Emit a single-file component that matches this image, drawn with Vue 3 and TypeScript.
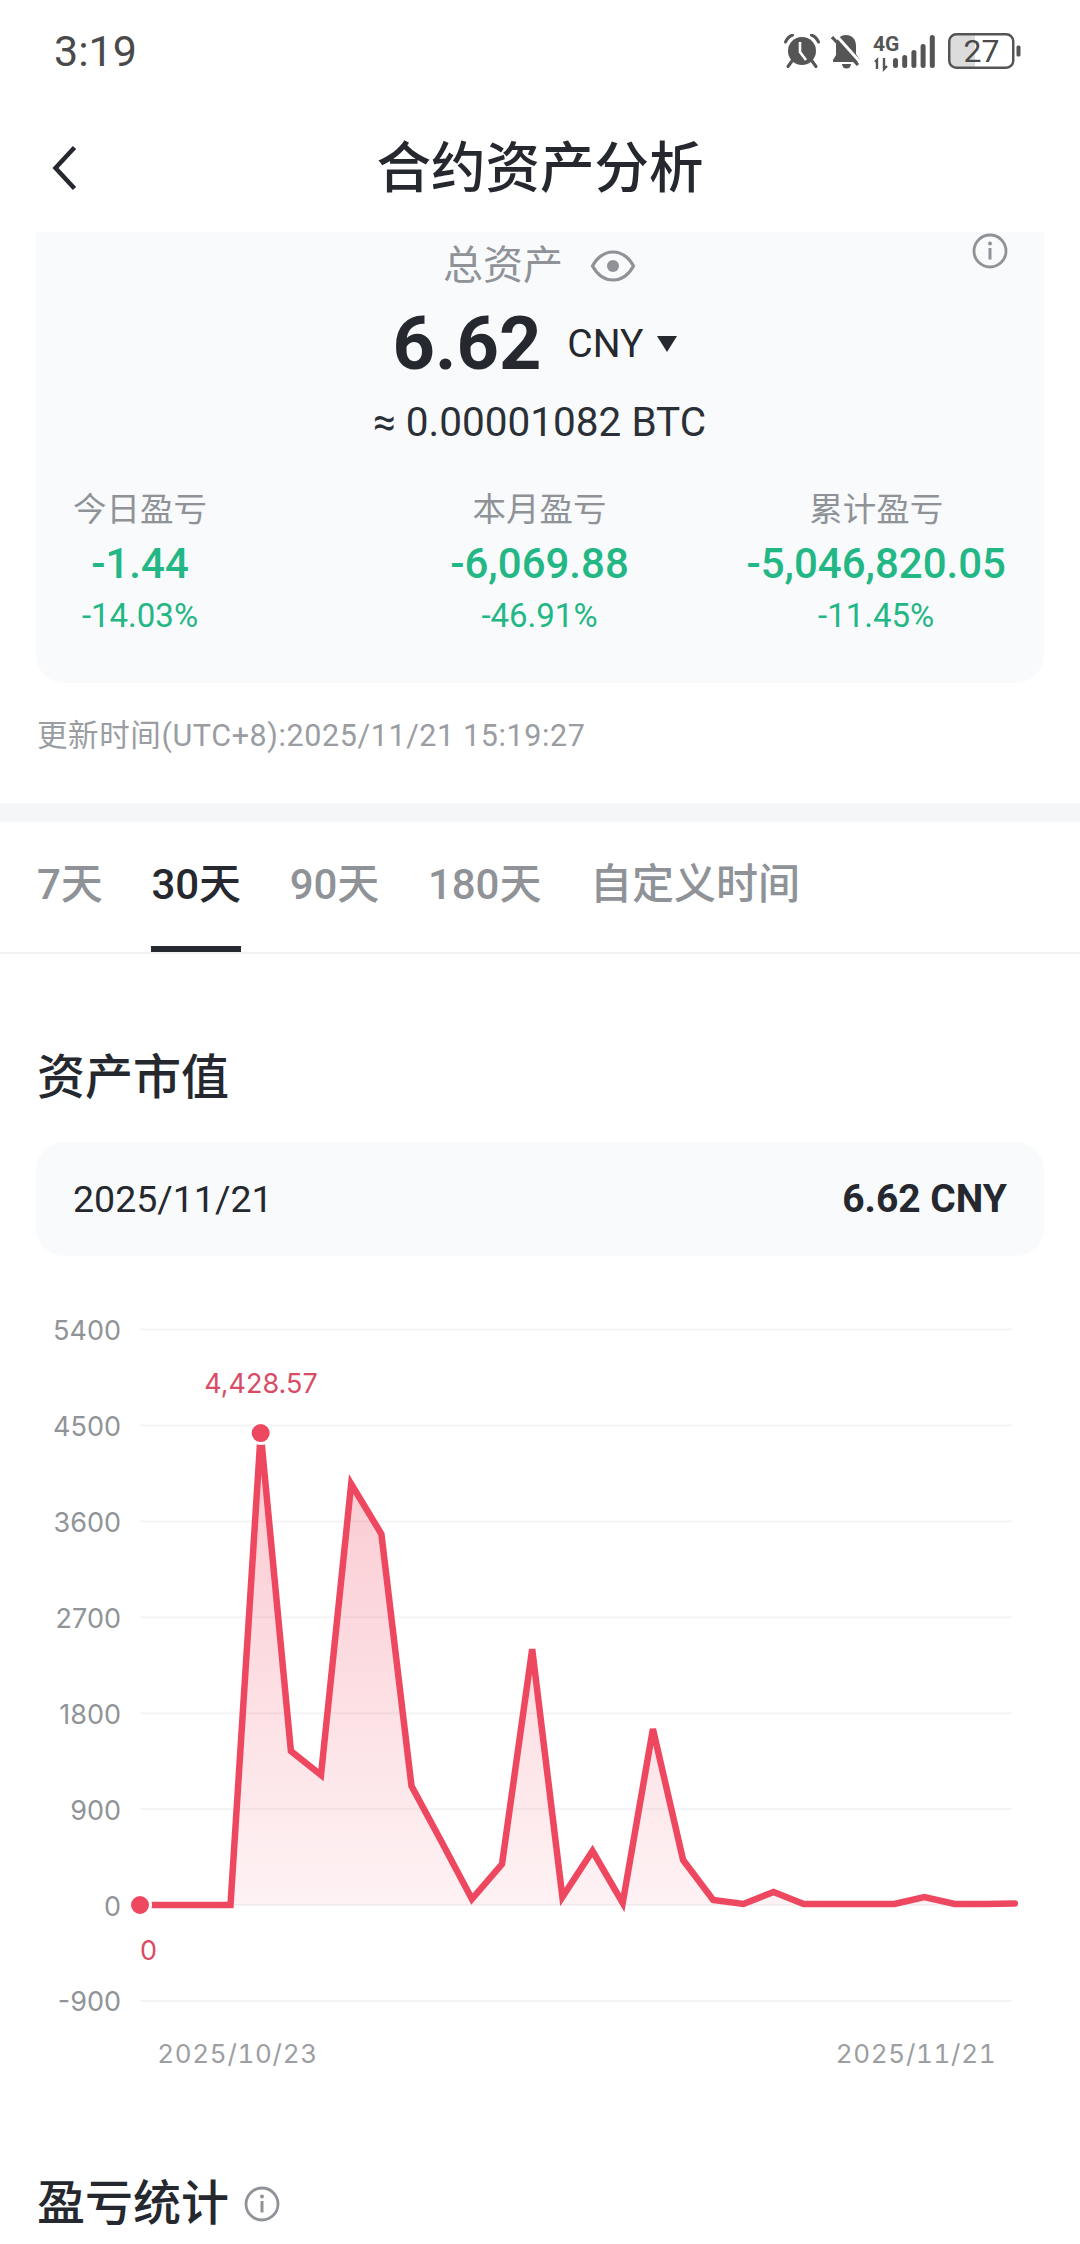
<script setup lang="ts">
import { computed } from 'vue'

// 图表坐标都以 svg 顶部（页面 y=1300）为原点
const X0 = 140
const STEP = 30.17
const ZERO_Y = 605
const PX_PER_UNIT = 95.9 / 900

const values = [
  0, 0, 0, 0, 4428.57, 1445, 1220, 3951, 3482, 1117, 591, 56, 385, 2402, 75, 507, 19, 1652, 422,
  47, 9, 122, 9, 9, 9, 9, 75, 9, 9, 14,
]
const yTicks = [5400, 4500, 3600, 2700, 1800, 900, 0, -900]

const xOf = (i: number) => X0 + i * STEP
const yOf = (v: number) => ZERO_Y - v * PX_PER_UNIT

const linePoints = computed(() =>
  values.map((v, i) => `${xOf(i).toFixed(1)},${yOf(v).toFixed(1)}`).join(' ')
)
const areaPoints = computed(
  () => `${X0},${ZERO_Y} ${linePoints.value} ${xOf(values.length - 1).toFixed(1)},${ZERO_Y}`
)

const stats = [
  { label: '今日盈亏', value: '-1.44', pct: '-14.03%' },
  { label: '本月盈亏', value: '-6,069.88', pct: '-46.91%' },
  { label: '累计盈亏', value: '-5,046,820.05', pct: '-11.45%' },
]
const tabs = ['7天', '30天', '90天', '180天', '自定义时间']
const signalBars = [
  { x: 0, h: 10 },
  { x: 9.2, h: 13 },
  { x: 18.4, h: 18 },
  { x: 27.6, h: 24 },
  { x: 36.8, h: 33 },
]
</script>

<template>
  <div class="page">
    <div class="status">
      <span class="clock">3:19</span>
      <div class="status-icons">
        <svg width="36" height="34" viewBox="0 0 36 34" class="st-alarm">
          <circle cx="18" cy="17" r="14" fill="#555" />
          <path d="M16 8v10l6 8" fill="none" stroke="#fff" stroke-width="2.6" />
          <path d="M1.500 8Q3.500 3 8.500 1M34.500 8Q32.500 3 27.500 1M8 27l-4 5.500M28 27l4 5.500" fill="none" stroke="#555" stroke-width="3" stroke-linecap="round" />
        </svg>
        <svg width="31" height="35" viewBox="0 0 31 35" class="st-bell">
          <path d="M15 1c6 0 10 4 10 11v8l4 6v2H2v-2l3-5v-9C5 5 9 1 15 1z" fill="#555" />
          <path d="M11 30h9a4.500 4.500 0 0 1-9 0z" fill="#555" />
          <path d="M4 0l25 28" stroke="#fff" stroke-width="3" />
          <path d="M1 3l26 28" stroke="#555" stroke-width="3.200" />
        </svg>
        <svg width="62" height="41" viewBox="0 -3 62 41" class="st-net">
          <text x="0" y="17" class="st-4g">4G</text>
          <path d="M2 28l2-2v9M11 24v11l3-3" fill="none" stroke="#555" stroke-width="2.400" />
          <rect v-for="b in signalBars" :key="b.x" :x="20 + b.x" :y="34 - b.h" width="5" :height="b.h" rx="2.500" fill="#555" />
        </svg>
        <svg width="73" height="36" viewBox="0 0 73 36" class="st-batt">
          <path d="M8 2h19v32H8a6 6 0 0 1-6-6V8a6 6 0 0 1 6-6z" fill="#dcdcdc" />
          <rect x="1.250" y="1.250" width="64" height="33.500" rx="7" fill="none" stroke="#555" stroke-width="2.500" />
          <text x="33.500" y="29" text-anchor="middle" class="st-level">27</text>
          <rect x="68.500" y="12.500" width="4" height="11" rx="1.500" fill="#555" />
        </svg>
      </div>
    </div>

    <div class="nav">
      <svg class="back" width="26" height="46" viewBox="0 0 26 46">
        <path d="M22.500 2.500L3.500 23l19 20.500" fill="none" stroke="#25282e" stroke-width="4.500" />
      </svg>
      <div class="nav-title">合约资产分析</div>
    </div>

    <section class="summary">
      <svg class="info-top" width="36" height="36" viewBox="0 0 36 36">
        <circle cx="18" cy="18" r="16" fill="none" stroke="#8f9398" stroke-width="2.800" />
        <circle cx="18" cy="10.500" r="2" fill="#8f9398" />
        <path d="M18 15v11.500" stroke="#8f9398" stroke-width="3" />
      </svg>
      <div class="total-label">
        <span>总资产</span>
        <svg width="46" height="32" viewBox="0 0 46 32">
          <path d="M2.500 16C8 6 14.500 2 23 2s15 4 20.500 14C38 26 31.500 30 23 30S8 26 2.500 16z" fill="none" stroke="#8f9398" stroke-width="3.200" />
          <circle cx="23" cy="16" r="6" fill="#8f9398" />
        </svg>
      </div>
      <div class="amount">
        <span class="amount-num">6.62</span>
        <span class="amount-unit">CNY</span>
        <svg width="20" height="16" viewBox="0 0 20 16"><polygon points="0,0 20,0 10,16" fill="#25282e" /></svg>
      </div>
      <div class="btc">≈ 0.00001082 BTC</div>
      <div class="stats">
        <div v-for="s in stats" :key="s.label" class="stat">
          <div class="stat-label">{{ s.label }}</div>
          <div class="stat-value">{{ s.value }}</div>
          <div class="stat-pct">{{ s.pct }}</div>
        </div>
      </div>
    </section>

    <div class="updated">更新时间(UTC+8):2025/11/21 15:19:27</div>
    <div class="band"></div>

    <div class="tabs">
      <div v-for="t in tabs" :key="t" class="tab" :class="{ active: t === '30天' }">{{ t }}</div>
    </div>

    <h2 class="section-title">资产市值</h2>
    <div class="value-row">
      <span class="value-date">2025/11/21</span>
      <span class="value-amt">6.62 CNY</span>
    </div>

    <svg class="chart" width="1080" height="780" viewBox="0 0 1080 780">
      <defs>
        <linearGradient id="area" x1="0" y1="133" x2="0" y2="605" gradientUnits="userSpaceOnUse">
          <stop offset="0" stop-color="#ee4860" stop-opacity="0.3" />
          <stop offset="1" stop-color="#ee4860" stop-opacity="0.07" />
        </linearGradient>
      </defs>
      <g v-for="t in yTicks" :key="t">
        <line x1="140" x2="1012" :y1="yOf(t)" :y2="yOf(t)" stroke="#f3f4f5" stroke-width="2" />
        <text x="121" :y="yOf(t) + 10.500" text-anchor="end" class="axis">{{ t }}</text>
      </g>
      <polygon :points="areaPoints" fill="url(#area)" />
      <polyline :points="linePoints" fill="none" stroke="#ee4860" stroke-width="6.500" stroke-linecap="round" />
      <circle :cx="xOf(0)" :cy="ZERO_Y" r="10.500" fill="#ee4860" stroke="#fff" stroke-width="3" />
      <circle :cx="xOf(4)" :cy="yOf(4428.57)" r="10.500" fill="#ee4860" stroke="#fff" stroke-width="3" />
      <text x="261" y="93" text-anchor="middle" class="mark">4,428.57</text>
      <text x="148.500" y="660" text-anchor="middle" class="mark">0</text>
      <text x="237.500" y="763" text-anchor="middle" class="axis-date">2025/10/23</text>
      <text x="916" y="763" text-anchor="middle" class="axis-date">2025/11/21</text>
    </svg>

    <h2 class="section-title second">
      <span>盈亏统计</span>
      <svg width="36" height="36" viewBox="0 0 36 36">
        <circle cx="18" cy="18" r="16" fill="none" stroke="#8f9398" stroke-width="2.800" />
        <circle cx="18" cy="10.500" r="2" fill="#8f9398" />
        <path d="M18 15v11.500" stroke="#8f9398" stroke-width="3" />
      </svg>
    </h2>
  </div>
</template>

<style>
html,
body {
  margin: 0;
  background: #fff;
}
</style>

<style scoped>
.page {
  width: 1080px;
  height: 2244px;
  overflow: hidden;
  background: #fff;
  color: #25282e;
  font-family: Roboto, 'Noto Sans CJK SC', sans-serif;
}
.status {
  height: 102px;
  display: flex;
  align-items: center;
  justify-content: space-between;
  padding: 0 59px 0 54px;
}
.clock {
  font-size: 43px;
  color: #4a4a4a;
}
.status-icons {
  display: flex;
  align-items: center;
}
.status-icons svg {
  display: block;
}
.st-bell,
.st-net {
  margin-left: 11px;
}
.st-batt {
  margin-left: 13px;
}
.st-4g {
  font-size: 21px;
  font-weight: 700;
  fill: #555;
}
.st-level {
  font-size: 32px;
  fill: #4a4a4a;
}
.nav {
  height: 130px;
  display: grid;
  grid-template-columns: 1fr auto 1fr;
  align-items: center;
  padding-left: 52px;
}
.nav-title {
  font-size: 54.500px;
  font-weight: 500;
  line-height: 64px;
  margin-left: -52px;
  padding-top: 2px;
}
.back {
  margin-top: 2px;
}
.summary {
  position: relative;
  height: 451px;
  box-sizing: border-box;
  margin: 0 36px;
  padding: 16px 38px 0 37px;
  background: #f8fafb;
  border-radius: 0 0 28px 28px;
}
.info-top {
  position: absolute;
  top: 1px;
  right: 36px;
}
.total-label {
  height: 36px;
  display: flex;
  align-items: center;
  justify-content: center;
  gap: 27px;
  font-size: 40px;
  line-height: 36px;
  color: #8f9398;
}
.amount {
  height: 76px;
  margin-top: 22px;
  padding-right: 9px;
  display: flex;
  align-items: center;
  justify-content: center;
}
.amount-num {
  font-size: 74px;
  font-weight: 700;
  line-height: 76px;
}
.amount-unit {
  font-size: 39px;
  margin-left: 26px;
  margin-right: 14px;
}
.btc {
  height: 48px;
  margin-top: 16px;
  font-size: 40.500px;
  line-height: 48px;
  text-align: center;
  color: #2b2f36;
}
.stats {
  margin-top: 45px;
  display: grid;
  grid-template-columns: 1fr 1fr 1fr;
}
.stat {
  text-align: center;
}
.stat:nth-child(1) {
  justify-self: start;
}
.stat:nth-child(2) {
  justify-self: center;
}
.stat:nth-child(3) {
  justify-self: end;
}
.stat-label {
  height: 38px;
  font-size: 33.500px;
  line-height: 38px;
  color: #8f9398;
}
.stat-value {
  height: 48px;
  margin-top: 11px;
  font-size: 42px;
  font-weight: 500;
  line-height: 48px;
  color: #22b784;
}
.stat-pct {
  height: 40px;
  margin-top: 8px;
  font-size: 33px;
  line-height: 40px;
  color: #22b784;
}
.updated {
  height: 40px;
  margin: 33px 0 0 37px;
  font-size: 30.500px;
  letter-spacing: 0.6px;
  line-height: 40px;
  color: #9a9da2;
}
.band {
  height: 19px;
  margin-top: 47px;
  background: #f5f6f7;
}
.tabs {
  display: flex;
  gap: 48.500px;
  padding-left: 37px;
  border-bottom: 2px solid #f0f1f2;
}
.tab {
  position: relative;
  padding: 40px 0 44px;
  font-size: 42px;
  font-weight: 500;
  line-height: 46px;
  color: #8f9398;
}
.tab.active {
  color: #25282e;
}
.tab.active::after {
  content: '';
  position: absolute;
  left: 0;
  right: 0;
  bottom: 0;
  height: 6px;
  background: #25282e;
}
.section-title {
  height: 60px;
  margin: 94px 0 0 37px;
  font-size: 48px;
  font-weight: 500;
  line-height: 60px;
}
.section-title.second {
  display: flex;
  align-items: center;
  gap: 15px;
  margin-top: 94px;
}
.value-row {
  height: 114px;
  margin: 34px 36px 0;
  padding: 0 37px;
  display: flex;
  align-items: center;
  justify-content: space-between;
  background: #f8fafb;
  border-radius: 28px;
  font-size: 37.500px;
}
.value-amt {
  font-size: 39px;
  font-weight: 700;
}
.chart {
  display: block;
  margin-top: 44px;
}
.axis {
  font-family: Inter, sans-serif;
  font-size: 27px;
  fill: #909498;
}
.axis-date {
  font-family: Inter, sans-serif;
  font-size: 26px;
  font-variant-numeric: tabular-nums;
  letter-spacing: 0.700px;
  fill: #9c9ea2;
}
.mark {
  font-family: Inter, sans-serif;
  font-size: 27px;
  fill: #d94c66;
}
</style>
